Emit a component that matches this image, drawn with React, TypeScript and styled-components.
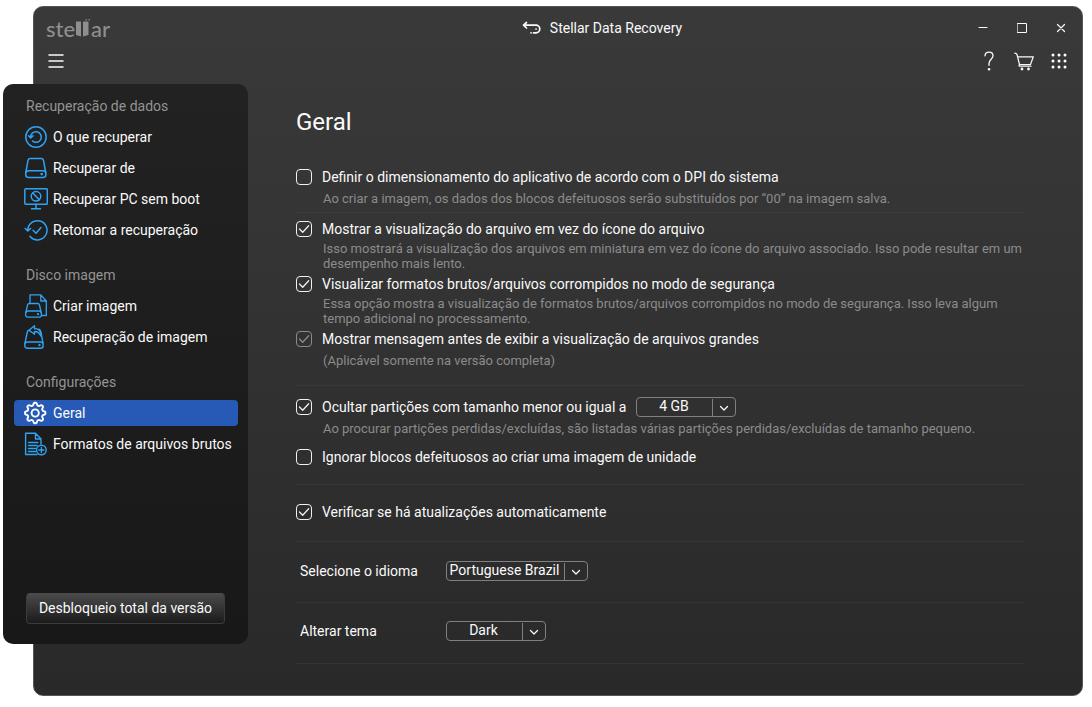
import React, { useState } from "react";
import styled, { createGlobalStyle } from "styled-components";

const GlobalStyle = createGlobalStyle`
  *, *::before, *::after { box-sizing: border-box; }
  body {
    margin: 0;
    background: #ffffff;
    font-family: Roboto, "Liberation Sans", sans-serif;
    font-size: 14px;
    line-height: 20px;
    color: #fafafa;
  }
  button, select, input { font: inherit; color: inherit; margin: 0; }
`;

const Page = styled.div`
  min-height: 100vh;
  display: flex;
  padding: 6px 9px 11px 33px;
`;

const AppWindow = styled.div`
  flex: 1;
  min-width: 0;
  display: flex;
  flex-direction: column;
  border: 1px solid #565656;
  border-radius: 10px;
  background: linear-gradient(#393939, #353535 30%, #292929);
`;

const TitleBar = styled.header`
  height: 42px;
  display: grid;
  grid-template-columns: 61fr auto 50fr;
  align-items: center;
  border-radius: 9px 9px 0 0;
  background: #393939;
`;

const Logo = styled.div`
  display: flex;
  align-items: center;
  gap: 1px;
  padding: 2px 0 0 12px;
  font: 500 22px/24px Lato, sans-serif;
  color: #8e8e8e;
`;

const Title = styled.div`
  display: flex;
  align-items: center;
  gap: 9px;
  white-space: nowrap;
`;

const Controls = styled.div`
  display: flex;
  justify-content: flex-end;
`;

const WindowControls = styled(Controls)`
  padding-right: 2px;
`;

const IconButton = styled.button<{ $w: number }>`
  width: ${(p) => p.$w}px;
  height: 24px;
  display: flex;
  align-items: center;
  justify-content: center;
  padding: 0;
  border: 0;
  background: none;
`;

const Toolbar = styled.div`
  height: 35px;
  display: flex;
  justify-content: space-between;
  padding: 0 6px 0 4px;
`;

const Body = styled.div`
  flex: 1;
  display: flex;
`;

const Sidebar = styled.nav`
  flex: none;
  width: 245px;
  margin: 0 0 51px -31px;
  padding: 14px 10px 20px 11px;
  display: flex;
  flex-direction: column;
  border-radius: 10px;
  background: linear-gradient(#222222, #1d1d1d 50%, #181818);
`;

const NavGroup = styled.section`
  margin-bottom: 24px;
`;

const NavHeading = styled.h2`
  margin: 0 0 10px;
  padding-left: 12px;
  font-size: 14px;
  font-weight: 400;
  line-height: 16px;
  color: #949494;
`;

const NavList = styled.div`
  display: flex;
  flex-direction: column;
  gap: 5px;
`;

const NavItem = styled.a<{ $active?: boolean }>`
  height: 26px;
  display: flex;
  align-items: center;
  gap: 5px;
  padding-left: 10px;
  border-radius: 4px;
  white-space: nowrap;
  text-decoration: none;
  color: #fafafa;
  background: ${(p) => (p.$active ? "#275ab7" : "none")};
  svg { flex: none; color: ${(p) => (p.$active ? "#ffffff" : "#2ea3f2")}; }
`;

const UnlockButton = styled.button`
  align-self: flex-start;
  width: 199px;
  height: 31px;
  margin: auto 0 0 12px;
  padding: 0 0 2px;
  border: 1px solid #3c3c3c;
  border-top-color: #4c4c4c;
  border-radius: 4px;
  background: linear-gradient(#4a4a4a, #1b1b1b);
`;

const Main = styled.main`
  flex: 1;
  min-width: 0;
  padding: 24px 57px 31px 48px;
`;

const Heading = styled.h1`
  margin: 0 0 31px;
  font-size: 24px;
  font-weight: 400;
  line-height: 28px;
`;

const Section = styled.section<{ $top: number; $bottom: number; $gap?: number }>`
  display: flex;
  flex-direction: column;
  gap: ${(p) => p.$gap ?? 0}px;
  padding: ${(p) => p.$top}px 0 ${(p) => p.$bottom}px;
  border-bottom: 1px solid rgba(255, 255, 255, 0.045);
`;

const OptionRow = styled.div`
  height: 20px;
  display: flex;
  align-items: center;
  gap: 10px;
`;

const OptionLabel = styled.label`
  display: flex;
  align-items: center;
  gap: 10px;
  white-space: nowrap;
`;

const CheckFrame = styled.span<{ $dim?: boolean }>`
  display: grid;
  width: 16px;
  height: 16px;
  color: ${(p) => (p.$dim ? "#8a8a8a" : "#f0f0f0")};
  > * { grid-area: 1 / 1; }
  svg { pointer-events: none; }
`;

const CheckInput = styled.input`
  appearance: none;
  width: 16px;
  height: 16px;
  border: 1px solid currentColor;
  border-radius: 4px;
`;

const Hint = styled.p<{ $loose?: boolean }>`
  margin: ${(p) => (p.$loose ? 4 : 2)}px 0 0;
  padding-left: 27px;
  font-size: 13px;
  line-height: 15px;
  color: #8b8b8b;
`;

const FieldRow = styled.div`
  display: flex;
  align-items: center;
  padding-left: 4px;
`;

const FieldLabel = styled.label`
  width: 146px;
`;

const SelectFrame = styled.span<{ $w: number }>`
  width: ${(p) => p.$w}px;
  height: 20px;
  display: grid;
  grid-template-columns: 1fr 23px;
  border: 1px solid #808080;
  border-radius: 4px;
`;

const SelectInput = styled.select`
  grid-area: 1 / 1 / 2 / 3;
  appearance: none;
  width: 100%;
  height: 17px;
  padding: 0 25px 0 0;
  border: 0;
  outline: 0;
  background: none;
  line-height: 17px;
  text-align: center;
  text-align-last: center;
  option { background: #2d2d2d; }
`;

const SelectArrow = styled.span`
  grid-area: 1 / 2;
  display: flex;
  align-items: center;
  justify-content: center;
  margin-top: 1px;
  border-left: 1px solid #808080;
  pointer-events: none;
`;

const Ico = ({ children, w = 24, h = 24, sw = 1.5 }: { children: React.ReactNode; w?: number; h?: number; sw?: number }) => (
  <svg width={w} height={h} viewBox={`0 0 ${w} ${h}`} fill="none" stroke="currentColor" strokeWidth={sw} strokeLinecap="round" strokeLinejoin="round" aria-hidden="true">
    {children}
  </svg>
);

// Outline of a cog with eight rounded lobes
const cog = Array.from({ length: 96 }, (_, i) => {
  const a = (i / 96) * Math.PI * 2;
  const r = 9 + 1.2 * Math.max(-1, Math.min(1, 1.5 * Math.cos(8 * a)));
  return `${(11.2 + r * Math.cos(a)).toFixed(2)},${(12 + r * Math.sin(a)).toFixed(2)}`;
}).join(" ");

const icons = {
  recover: (
    <Ico>
      <circle cx="12" cy="12" r="10.2" />
      <path d="M6.700 12.500a5.300 5.300 0 1 1 1.900 3.600M4.500 10.800l2.200 2.200 2.400-2.200" />
    </Ico>
  ),
  drive: (
    <Ico>
      <path d="M1.800 16.500 4 4.300Q4.400 2.500 6.300 2.500H17.200Q19.100 2.500 19.500 4.300L21.700 16.500" />
      <rect x="1.700" y="14.700" width="20.200" height="6.800" rx="3" />
      <circle cx="17.700" cy="18.100" r=".6" fill="currentColor" />
    </Ico>
  ),
  pc: (
    <Ico>
      <rect x=".8" y="1.800" width="22.500" height="15.500" rx="1" />
      <path d="M12 17.500V21.500M7.500 21.700H16.500" />
      <circle cx="12" cy="9.300" r="4.800" />
      <path d="m8.700 6 6.600 6.600" />
    </Ico>
  ),
  resume: (
    <Ico>
      <path d="M3.800 12.500a9.600 9.600 0 1 1 2.100 5.800q1 1.200 2.600 2M1.200 10.500l2.600 2.400 2.800-2.400" />
      <path d="m9 12.300 3 3 5-5.800" />
    </Ico>
  ),
  image: (
    <Ico sw={1.3}>
      <path d="M6 9.500V.9H16.800L22.300 7V21.500H18.500M16.800 1V7H22" />
      <path d="M2 18 3.500 11Q4 9.500 5.300 9.500H13.700Q15 9.500 15.500 11L17 18" />
      <rect x="1.600" y="17" width="15.800" height="6.200" rx="2.500" />
      <circle cx="14" cy="20.100" r=".5" fill="currentColor" />
    </Ico>
  ),
  imageRecover: (
    <Ico sw={1.4}>
      <path d="M5.500 5.200Q3.700 5.200 3.300 7L1 18M15 4Q16.500 4.800 16.800 7L19 18" />
      <rect x=".8" y="17" width="18.300" height="6.200" rx="2.500" />
      <circle cx="15.500" cy="20.100" r=".5" fill="currentColor" />
      <path d="M10.500.8 5 5.200l5.500 4V6.500Q15 6.500 16.800 11 17.500 3.800 10.500 3.500Z" />
    </Ico>
  ),
  gear: (
    <Ico sw={1.9}>
      <circle cx="11.200" cy="12" r="3.600" />
      <polygon points={cog} />
    </Ico>
  ),
  file: (
    <Ico sw={1.4}>
      <path d="M17 12V7L11.500 1.200H1.600V22.500H13M11.500 1.500V7H17M4.500 10.500H14M4.500 13.500H13M4.500 16.500H11.500M4.500 19.500H11.500" />
      <circle cx="17.400" cy="18" r="4.800" />
      <path d="M17.400 15.500v5M14.900 18h5" />
    </Ico>
  ),
};

const nav: { heading: string; items: { icon: keyof typeof icons; text: string }[] }[] = [
  {
    heading: "Recuperação de dados",
    items: [
      { icon: "recover", text: "O que recuperar" },
      { icon: "drive", text: "Recuperar de" },
      { icon: "pc", text: "Recuperar PC sem boot" },
      { icon: "resume", text: "Retomar a recuperação" },
    ],
  },
  {
    heading: "Disco imagem",
    items: [
      { icon: "image", text: "Criar imagem" },
      { icon: "imageRecover", text: "Recuperação de imagem" },
    ],
  },
  {
    heading: "Configurações",
    items: [
      { icon: "gear", text: "Geral" },
      { icon: "file", text: "Formatos de arquivos brutos" },
    ],
  },
];

function Check({ id, initial, dim }: { id: string; initial?: boolean; dim?: boolean }) {
  const [on, setOn] = useState(!!initial);
  return (
    <CheckFrame $dim={dim}>
      <CheckInput id={id} type="checkbox" checked={on} disabled={dim} onChange={(e) => setOn(e.target.checked)} />
      {on && (
        <Ico w={16} h={16} sw={1.3}>
          <path d="m3.500 8 3.200 3.200 6-6.500" />
        </Ico>
      )}
    </CheckFrame>
  );
}

function Option(props: {
  id: string;
  text: string;
  hint?: string;
  checked?: boolean;
  dim?: boolean;
  loose?: boolean;
  children?: React.ReactNode;
}) {
  return (
    <div>
      <OptionRow>
        <OptionLabel htmlFor={props.id}>
          <Check id={props.id} initial={props.checked} dim={props.dim} />
          {props.text}
        </OptionLabel>
        {props.children}
      </OptionRow>
      {props.hint && <Hint $loose={props.loose}>{props.hint}</Hint>}
    </div>
  );
}

function Select({ id, width, options, label }: { id: string; width: number; options: string[]; label?: string }) {
  return (
    <SelectFrame $w={width}>
      <SelectInput id={id} aria-label={label} defaultValue={options[0]}>
        {options.map((o) => (
          <option key={o}>{o}</option>
        ))}
      </SelectInput>
      <SelectArrow>
        <Ico w={10} h={8} sw={1.3}>
          <path d="m1.500 2.500 3.500 3.500 3.500-3.500" />
        </Ico>
      </SelectArrow>
    </SelectFrame>
  );
}

export default function App() {
  return (
    <>
      <GlobalStyle />
      <Page>
        <AppWindow>
          <TitleBar>
            <Logo aria-label="stellar">
              <span>ste</span>
              <svg width="14" height="22" viewBox="0 0 14 22" fill="currentColor" aria-hidden="true">
                <path d="M0 3.500h5v15L0 17Z" />
                <path d="M7 3.500h5.500V17L7 18.500Z" />
                <path d="M9.500 1h1.500v1.500H9.500ZM12.500 1h1.500v1.500h-1.500Z" opacity=".8" />
              </svg>
              <span>ar</span>
            </Logo>
            <Title>
              <Ico w={19} h={14} sw={1.7}>
                <path d="M4.500 1.500 1.500 4.200l3 2.800M1.800 4.200H14a3.800 3.800 0 0 1 0 7.600h-1.500" />
                <path d="M9 11.800h.1M11.500 11.800h.1M14 8h.1" />
              </Ico>
              Stellar Data Recovery
            </Title>
            <WindowControls>
              <IconButton $w={39} aria-label="Minimizar">
                <Ico w={10} h={10} sw={1}><path d="M1 4.500h8" /></Ico>
              </IconButton>
              <IconButton $w={39} aria-label="Maximizar">
                <Ico w={10} h={10} sw={1}><path d="M.5.5h9v9h-9Z" strokeLinejoin="miter" /></Ico>
              </IconButton>
              <IconButton $w={39} aria-label="Fechar">
                <Ico w={10} h={10} sw={1.2}><path d="m1.500 1.500 7 7M8.500 1.500l-7 7" /></Ico>
              </IconButton>
            </WindowControls>
          </TitleBar>
          <Toolbar>
            <IconButton $w={35} aria-label="Menu">
              <Ico w={16} h={14}><path d="M1 1h14M1 7h14M1 13h14" /></Ico>
            </IconButton>
            <Controls>
              <IconButton $w={35} aria-label="Ajuda">
                <Ico w={12} h={20} sw={1.3}>
                  <path d="M2 4.800C2.200 2.500 3.800 1.200 6 1.200S10 2.500 10 4.800C10 8 6 8.500 6 12.500V14.300" />
                  <path d="M6 18.200h.1" strokeWidth="2.400" />
                </Ico>
              </IconButton>
              <IconButton $w={35} aria-label="Carrinho">
                <Ico w={20} h={20} sw={1.2}>
                  <path d="M.8 2.200Q2.500 2.200 3 3.500L5.500 13.500H16.500L19.300 5.800H3.600M5.500 13.500Q4.500 15 5.500 15.200H17" />
                  <circle cx="8" cy="18" r=".8" fill="currentColor" />
                  <circle cx="14.500" cy="18" r=".8" fill="currentColor" />
                </Ico>
              </IconButton>
              <IconButton $w={35} aria-label="Aplicativos">
                <svg width="16" height="16" viewBox="0 0 16 16" fill="#ffffff" aria-hidden="true">
                  {[2, 8, 14].map((y) => [2, 8, 14].map((x) => <circle key={`${x}-${y}`} cx={x} cy={y} r="1.500" />))}
                </svg>
              </IconButton>
            </Controls>
          </Toolbar>
          <Body>
            <Sidebar aria-label="Navegação">
              {nav.map((g) => (
                <NavGroup key={g.heading}>
                  <NavHeading>{g.heading}</NavHeading>
                  <NavList>
                    {g.items.map((i) => (
                      <NavItem key={i.text} href="#" $active={i.icon === "gear"}>
                        {icons[i.icon]}
                        {i.text}
                      </NavItem>
                    ))}
                  </NavList>
                </NavGroup>
              ))}
              <UnlockButton>Desbloqueio total da versão</UnlockButton>
            </Sidebar>
            <Main>
              <Heading>Geral</Heading>
              <Section $top={0} $bottom={6}>
                <Option
                  id="dpi"
                  loose
                  text="Definir o dimensionamento do aplicativo de acordo com o DPI do sistema"
                  hint="Ao criar a imagem, os dados dos blocos defeituosos serão substituídos por “00” na imagem salva."
                />
              </Section>
              <Section $top={6} $bottom={17} $gap={3}>
                <Option
                  id="preview"
                  checked
                  text="Mostrar a visualização do arquivo em vez do ícone do arquivo"
                  hint="Isso mostrará a visualização dos arquivos em miniatura em vez do ícone do arquivo associado. Isso pode resultar em um desempenho mais lento."
                />
                <Option
                  id="raw"
                  checked
                  text="Visualizar formatos brutos/arquivos corrompidos no modo de segurança"
                  hint="Essa opção mostra a visualização de formatos brutos/arquivos corrompidos no modo de segurança. Isso leva algum tempo adicional no processamento."
                />
                <Option
                  id="large"
                  checked
                  dim
                  loose
                  text="Mostrar mensagem antes de exibir a visualização de arquivos grandes"
                  hint="(Aplicável somente na versão completa)"
                />
              </Section>
              <Section $top={11} $bottom={17} $gap={11}>
                <Option
                  id="partitions"
                  checked
                  loose
                  text="Ocultar partições com tamanho menor ou igual a"
                  hint="Ao procurar partições perdidas/excluídas, são listadas várias partições perdidas/excluídas de tamanho pequeno."
                >
                  <Select id="size" label="Tamanho" width={100} options={["4 GB", "8 GB"]} />
                </Option>
                <Option id="bad" text="Ignorar blocos defeituosos ao criar uma imagem de unidade" />
              </Section>
              <Section $top={17} $bottom={19}>
                <Option id="updates" checked text="Verificar se há atualizações automaticamente" />
              </Section>
              <Section $top={19} $bottom={21}>
                <FieldRow>
                  <FieldLabel htmlFor="lang">Selecione o idioma</FieldLabel>
                  <Select id="lang" width={142} options={["Portuguese Brazil", "English"]} />
                </FieldRow>
              </Section>
              <Section $top={18} $bottom={22}>
                <FieldRow>
                  <FieldLabel htmlFor="theme">Alterar tema</FieldLabel>
                  <Select id="theme" width={100} options={["Dark", "Light"]} />
                </FieldRow>
              </Section>
            </Main>
          </Body>
        </AppWindow>
      </Page>
    </>
  );
}
